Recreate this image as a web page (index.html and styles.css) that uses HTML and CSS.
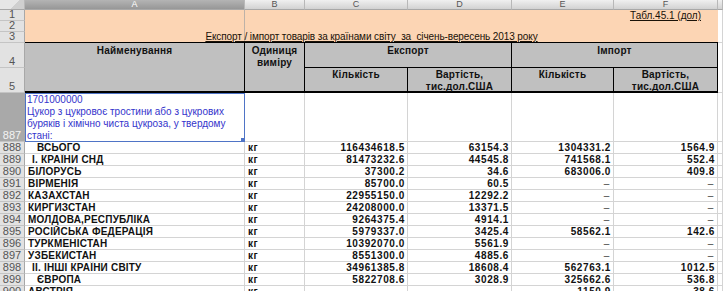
FILE: index.html
```html
<!DOCTYPE html>
<html lang="uk">
<head>
    <meta charset="UTF-8">
    <meta name="viewport" content="width=device-width, initial-scale=1.0">
    <title>Табл.45.1 (дол)</title>
    <link rel="stylesheet" href="styles.css">
</head>
<body>
    <div class="sheet">
        <!-- column letters -->
        <div class="col-head corner"></div>
        <div class="col-head selected">A</div>
        <div class="col-head">B</div>
        <div class="col-head">C</div>
        <div class="col-head">D</div>
        <div class="col-head">E</div>
        <div class="col-head">F</div>
        <div class="col-head"></div>

        <!-- rows 1-3 -->
        <div class="row-num">1</div>
        <div class="title-block">
            <div class="tab-ref"><u>Табл.45.1 (дол)</u></div>
            <div class="title"><u>Експорт / імпорт товарів за країнами світу  за  січень-вересень 2013 року</u></div>
        </div>
        <div class="cell blank tall3"></div>
        <div class="row-num">2</div>
        <div class="row-num">3</div>

        <!-- rows 4-5 -->
        <div class="row-num">4</div>
        <div class="hd hd-name">Найменування</div>
        <div class="hd hd-unit">Одиниця<br>виміру</div>
        <div class="hd hd-group">Експорт</div>
        <div class="hd hd-group">Імпорт</div>
        <div class="cell blank tall2"></div>
        <div class="row-num">5</div>
        <div class="hd hd-sub">Кількість</div>
        <div class="hd hd-sub">Вартість,<br>тис.дол.США</div>
        <div class="hd hd-sub">Кількість</div>
        <div class="hd hd-sub">Вартість,<br>тис.дол.США</div>

        <!-- row 887 -->
        <div class="row-num active">887</div>
        <div class="cell product">1701000000<br>Цукор з цукровоє тростини або з цукрових<br>буряків і хімічно чиста цукроза, у твердому<br>стані:</div>
        <div class="cell"></div>
        <div class="cell"></div>
        <div class="cell"></div>
        <div class="cell"></div>
        <div class="cell"></div>
        <div class="cell"></div>

        <div class="row-num">888</div>
        <div class="cell name indent2">ВСЬОГО</div>
        <div class="cell unit">кг</div>
        <div class="cell num">116434618.5</div>
        <div class="cell num">63154.3</div>
        <div class="cell num">1304331.2</div>
        <div class="cell num">1564.9</div>
        <div class="cell"></div>

        <div class="row-num">889</div>
        <div class="cell name indent1">І. КРАЇНИ СНД</div>
        <div class="cell unit">кг</div>
        <div class="cell num">81473232.6</div>
        <div class="cell num">44545.8</div>
        <div class="cell num">741568.1</div>
        <div class="cell num">552.4</div>
        <div class="cell"></div>

        <div class="row-num">890</div>
        <div class="cell name">БІЛОРУСЬ</div>
        <div class="cell unit">кг</div>
        <div class="cell num">37300.2</div>
        <div class="cell num">34.6</div>
        <div class="cell num">683006.0</div>
        <div class="cell num">409.8</div>
        <div class="cell"></div>

        <div class="row-num">891</div>
        <div class="cell name">ВІРМЕНІЯ</div>
        <div class="cell unit">кг</div>
        <div class="cell num">85700.0</div>
        <div class="cell num">60.5</div>
        <div class="cell num dash">–</div>
        <div class="cell num dash">–</div>
        <div class="cell"></div>

        <div class="row-num">892</div>
        <div class="cell name">КАЗАХСТАН</div>
        <div class="cell unit">кг</div>
        <div class="cell num">22955150.0</div>
        <div class="cell num">12292.2</div>
        <div class="cell num dash">–</div>
        <div class="cell num dash">–</div>
        <div class="cell"></div>

        <div class="row-num">893</div>
        <div class="cell name">КИРГИЗСТАН</div>
        <div class="cell unit">кг</div>
        <div class="cell num">24208000.0</div>
        <div class="cell num">13371.5</div>
        <div class="cell num dash">–</div>
        <div class="cell num dash">–</div>
        <div class="cell"></div>

        <div class="row-num">894</div>
        <div class="cell name">МОЛДОВА,РЕСПУБЛІКА</div>
        <div class="cell unit">кг</div>
        <div class="cell num">9264375.4</div>
        <div class="cell num">4914.1</div>
        <div class="cell num dash">–</div>
        <div class="cell num dash">–</div>
        <div class="cell"></div>

        <div class="row-num">895</div>
        <div class="cell name">РОСІЙСЬКА ФЕДЕРАЦІЯ</div>
        <div class="cell unit">кг</div>
        <div class="cell num">5979337.0</div>
        <div class="cell num">3425.4</div>
        <div class="cell num">58562.1</div>
        <div class="cell num">142.6</div>
        <div class="cell"></div>

        <div class="row-num">896</div>
        <div class="cell name">ТУРКМЕНІСТАН</div>
        <div class="cell unit">кг</div>
        <div class="cell num">10392070.0</div>
        <div class="cell num">5561.9</div>
        <div class="cell num dash">–</div>
        <div class="cell num dash">–</div>
        <div class="cell"></div>

        <div class="row-num">897</div>
        <div class="cell name">УЗБЕКИСТАН</div>
        <div class="cell unit">кг</div>
        <div class="cell num">8551300.0</div>
        <div class="cell num">4885.6</div>
        <div class="cell num dash">–</div>
        <div class="cell num dash">–</div>
        <div class="cell"></div>

        <div class="row-num">898</div>
        <div class="cell name indent1">ІІ. ІНШІ КРАЇНИ СВІТУ</div>
        <div class="cell unit">кг</div>
        <div class="cell num">34961385.8</div>
        <div class="cell num">18608.4</div>
        <div class="cell num">562763.1</div>
        <div class="cell num">1012.5</div>
        <div class="cell"></div>

        <div class="row-num">899</div>
        <div class="cell name indent2">ЄВРОПА</div>
        <div class="cell unit">кг</div>
        <div class="cell num">5822708.6</div>
        <div class="cell num">3028.9</div>
        <div class="cell num">325662.6</div>
        <div class="cell num">536.8</div>
        <div class="cell"></div>

        <div class="row-num">900</div>
        <div class="cell name">АВСТРІЯ</div>
        <div class="cell unit">кг</div>
        <div class="cell num dash">–</div>
        <div class="cell num dash">–</div>
        <div class="cell num">1150.9</div>
        <div class="cell num">38.6</div>
        <div class="cell"></div>
    </div>
</body>
</html>
```

FILE: styles.css
```css
* {
    margin: 0;
    padding: 0;
    box-sizing: border-box;
}
body {
    font-family: 'Liberation Sans', Arial, sans-serif;
    background: #fff;
    overflow: hidden;
}
.sheet {
    display: grid;
    grid-template-columns: 25px 220px 60px 103px 104px 102px 104px 1fr;
    grid-template-rows: 10px 11px 11px 11px 25px 25px 49px;
    grid-auto-rows: 12px;
    font-size: 10px;
    color: #111;
}
.col-head {
    background: linear-gradient(#f0f0f0, #d2d2d2);
    border-right: 1px solid #b8b8b8;
    border-bottom: 1px solid #a8a8a8;
    color: #555;
    font-size: 9px;
    line-height: 9px;
    text-align: center;
}
.col-head.selected {
    background: linear-gradient(#b4b4b4, #979797);
    color: #fff;
}
.corner {
    background: linear-gradient(135deg, #e6e6e6 60%, #cfcfcf 60%);
}
.row-num {
    background: #e2e2e2;
    border-right: 1px solid #a8a8a8;
    border-bottom: 1px solid #c4c4c4;
    color: #555;
    font-size: 11px;
    line-height: 11px;
    display: flex;
    align-items: flex-end;
    justify-content: center;
}
.row-num.active {
    background: #a9a9a9;
    color: #f4f4f4;
}
.title-block {
    grid-column: span 6;
    grid-row: span 3;
    background: linear-gradient(to right, transparent 219px, #bdb2a8 219px, #bdb2a8 220px, transparent 220px), #fcd5b4;
    border-bottom: 1px solid #000;
    display: flex;
    flex-direction: column;
    justify-content: space-between;
    line-height: 11px;
    color: #1a1208;
}
.tab-ref {
    text-align: right;
    padding-right: 17px;
}
.title {
    text-align: center;
    white-space: pre;
    letter-spacing: -0.1px;
}
.cell {
    border-right: 1px solid #d4d4d4;
    border-bottom: 1px solid #d4d4d4;
    line-height: 11px;
    white-space: nowrap;
    overflow: hidden;
}
.tall3 { grid-row: span 3; }
.tall2 { grid-row: span 2; }
.hd {
    background: #c0c0c0;
    border-right: 1px solid #000;
    border-bottom: 1px solid #000;
    font-weight: bold;
    text-align: center;
    line-height: 12px;
    padding-top: 2px;
    letter-spacing: 0.2px;
}
.hd-name,
.hd-unit {
    grid-row: span 2;
    border-bottom-width: 2px;
}
.hd-group { grid-column: span 2; }
.hd-sub {
    border-bottom-width: 2px;
    padding-top: 1px;
}
.product {
    position: relative;
    border: 1px solid #4f74c6;
    color: #3434cc;
    line-height: 12px;
    padding-left: 1px;
    white-space: normal;
}
.product::after {
    content: '';
    position: absolute;
    right: -3px;
    bottom: -3px;
    width: 5px;
    height: 5px;
    background: #4f74c6;
    border: 1px solid #fff;
}
.name {
    font-weight: bold;
    padding-left: 3px;
    letter-spacing: 0.2px;
}
.indent1 { padding-left: 7px; }
.indent2 { padding-left: 12px; }
.unit {
    font-weight: bold;
    padding-left: 3px;
    letter-spacing: 0.4px;
}
.num {
    font-weight: bold;
    text-align: right;
    padding-right: 2px;
    letter-spacing: 0.6px;
}
.dash {
    font-weight: normal;
    color: #444;
    padding-right: 3px;
}
```
